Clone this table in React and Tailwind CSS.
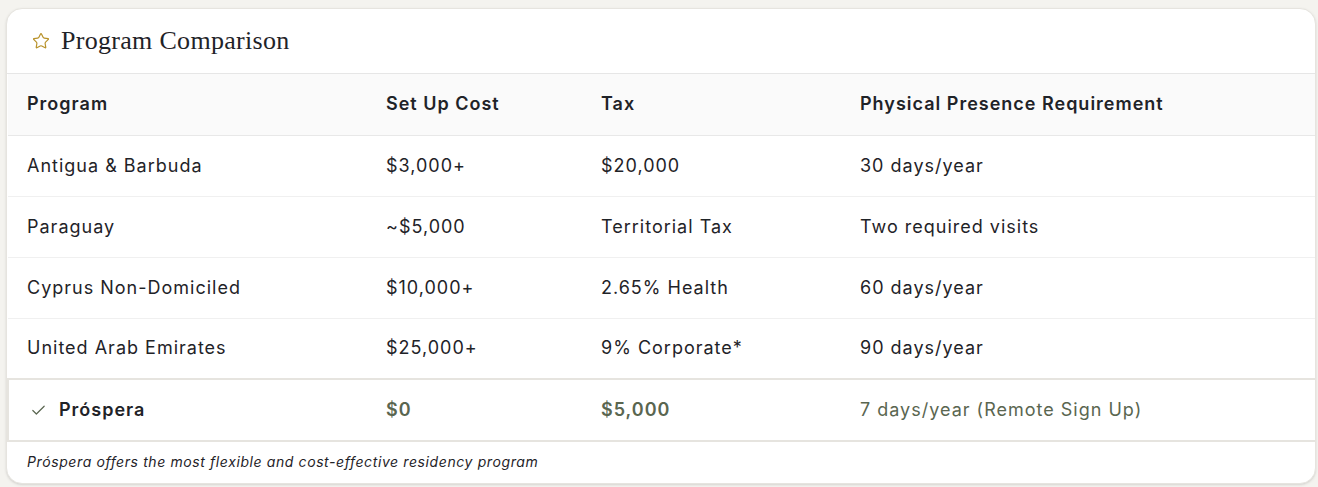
import React from 'react';
import { Star, Check } from 'lucide-react';

const rows = [
  { program: 'Antigua & Barbuda', cost: '$3,000+', tax: '$20,000', presence: '30 days/year' },
  { program: 'Paraguay', cost: '~$5,000', tax: 'Territorial Tax', presence: 'Two required visits' },
  { program: 'Cyprus Non-Domiciled', cost: '$10,000+', tax: '2.65% Health', presence: '60 days/year' },
  { program: 'United Arab Emirates', cost: '$25,000+', tax: '9% Corporate*', presence: '90 days/year' },
];

const App = () => {
  return (
    <div className="bg-[#f4f3ef] h-[487px] pt-[8px] pl-[6px] pr-[2px]" style={{ fontFamily: 'Inter, "Noto Sans", sans-serif' }}>
      <div className="bg-white border border-[#e6e4df] rounded-2xl shadow-sm overflow-hidden h-[476px] flex flex-col text-[#1f2328]">
        {/* header */}
        <div className="h-[65px] flex items-center gap-[11px] pl-[25px] border-b border-[#e6e6e6]">
          <Star size={18} strokeWidth={1.6} className="text-[#b8922a]" />
          <h2 className="text-[26px] leading-none tracking-[0.3px] text-[#1f2328]" style={{ fontFamily: '"Liberation Serif", "DejaVu Serif", serif' }}>
            Program Comparison
          </h2>
        </div>

        <table className="w-full border-collapse text-lg tracking-[1px] table-fixed">
          <colgroup>
            <col className="w-[359px]" />
            <col className="w-[215px]" />
            <col className="w-[259px]" />
            <col />
          </colgroup>
          <thead>
            <tr className="bg-[#fafafa] h-[61px] border-b border-[#e8e8e8]">
              <th className="text-left font-semibold pl-[19px]">Program</th>
              <th className="text-left font-semibold pl-[19px]">Set Up Cost</th>
              <th className="text-left font-semibold pl-[19px]">Tax</th>
              <th className="text-left font-semibold pl-[19px]">Physical Presence Requirement</th>
            </tr>
          </thead>
          <tbody>
            {rows.map((r) => (
              <tr key={r.program} className="h-[61px] border-b border-[#f0f0f0]">
                <td className="pl-[19px]">{r.program}</td>
                <td className="pl-[19px]">{r.cost}</td>
                <td className="pl-[19px]">{r.tax}</td>
                <td className="pl-[19px]">{r.presence}</td>
              </tr>
            ))}
            <tr className="h-[62px] border-y-2 border-l-2 border-[#e6e4df] bg-white">
              <td className="pl-[21px]">
                <div className="flex items-center gap-[12px]">
                  <Check size={17} strokeWidth={1.7} className="text-[#5a6650]" />
                  <span className="font-semibold">Próspera</span>
                </div>
              </td>
              <td className="pl-[19px] font-semibold text-[#5a6650]">$0</td>
              <td className="pl-[19px] font-semibold text-[#5a6650]">$5,000</td>
              <td className="pl-[19px] text-[#5a6650]">7 days/year (Remote Sign Up)</td>
            </tr>
          </tbody>
        </table>

        <div className="flex-1 flex items-center pl-5 pb-[2px]">
          <p className="text-sm italic tracking-[0.6px]">Próspera offers the most flexible and cost-effective residency program</p>
        </div>
      </div>
    </div>
  );
};

export default App;
